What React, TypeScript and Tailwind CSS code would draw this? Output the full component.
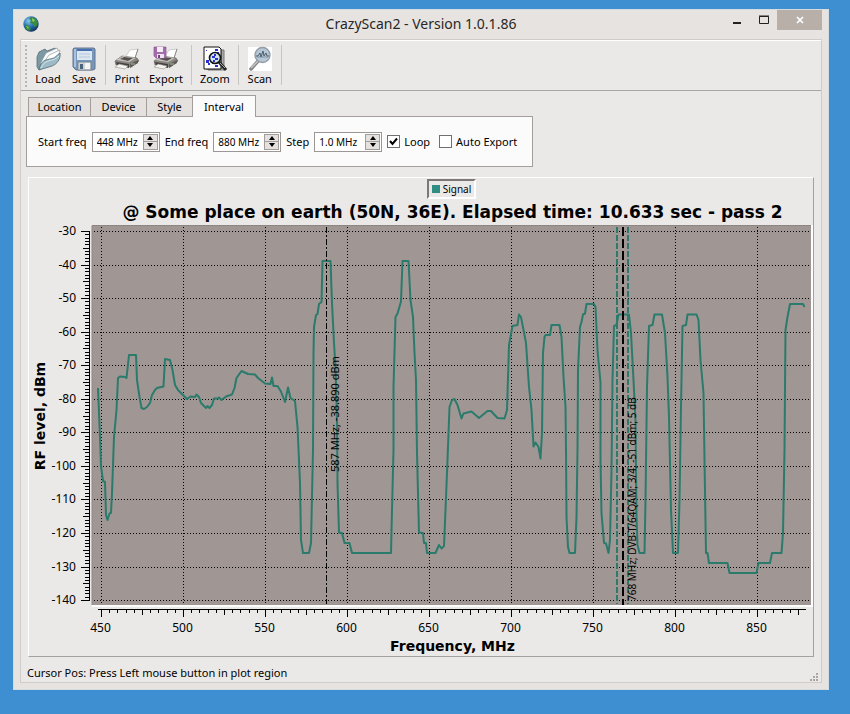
import { useState } from "react";
import type { ReactNode } from "react";

// signal level samples, already in plot coordinates
const TRACE = `98,388 100,437 101,466 103,481 105,482 106,515 107.5,520 109.5,513.5 111,513 112,493 114,437 116.5,410
118,378 120,376.5 125,377 126.5,378 129,355 136,355 137,380 139.5,397 141.5,408 144,409 147,407 150,403 152,395 155,390
157,388 163.5,386.5 165,359 170,360 172.5,370 175,385 178,390 183,395 187,399 190.5,396.5 195,397 196.5,394.5 199,397 201,403
206,408 207.5,406 209.5,408 212,405 214,398.5 218,398.5 219,397.5 221.5,400 226,396.5 232,394.5 234.5,388 236.5,378 241.5,371
248,374 255,374.5 258,378 265,383.5 270.5,384 272,377.5 273.5,386 277.5,386 281,391.5 285,402 288,387.5 290.5,398 295,401
297.5,427 299,460 300,483 301,540 303,553 309,553 311,543 313,450 313.5,353 314,327 316,315 317.5,314 319,304 321.5,302
322.5,261 330.5,261 332,303 334,343 335.5,367 337,420 337.5,483 339,532.5 342,533 344.5,543 349.5,543 352,553 391,553
392,510 393.5,450 393.5,387 395.5,317 397.5,313.5 401,301.5 402.5,261 408.5,261 410.5,300 413,317 414.5,353 416,380 417,453
419,532.5 423,533 424,543 426,543 427,553 435.5,553 439,545 441.5,548.5 444,546 445.5,510 447.5,460 449.5,407 452,400
454.5,399 457.5,405 461.5,418.5 463.5,413.5 471.5,411.5 479,418 487.5,411 491,411 497.5,418 504.5,418.5 507,410 509,345
512.5,326 517.5,325 519,314.5 521,317 526,343 529,387 531.5,410 533.5,446.5 535.5,442.5 538.5,447 540.5,458.5 542,433
543,353 544.5,337 545.5,335 550,335 551.5,325 559.5,325 561.5,337 563.5,377 565.5,407 566,450 566.5,517 568,547 569.5,553
575,553 576.5,517 577.5,450 578,370 580,327 581.5,322 583,314.5 585,313.5 586.5,304 594,304 595.5,307 597.5,350 600.5,383
600.5,460 601.5,513 604,543 606,543.5 608.5,553 610,540 611.5,470 612.5,380 614,326 616.5,325 618.5,314.5 629,314.5
631,333 633.5,380 635.5,420 636.5,517 637.5,545 639.5,553 644.5,553 645.5,500 647,387 649,326 652.5,325 654.5,314.5
662,314.5 665,333 667.5,377 669,417 671,510 673,553 678,553 679.5,500 681,407 682.5,326 686,325 687.5,314.5 696.5,314.5
698.5,320 700.5,360 703.5,393 704.5,460 706,553 707.5,553 709,563 727.5,563 729.5,573 756.5,573 758.5,563 770,563 772,553
781.5,553 783,533 784.5,450 785.5,330 787.5,317 790,304 803,304 804.5,307`;

const xOf = (freq: number) => Math.round(101 + (freq - 450) * 1.64) + 0.5;
const yOf = (level: number) => Math.round(231 + (-30 - level) * 3.355) + 0.5;

const levels = Array.from({ length: 111 }, (_, i) => -30 - i);
const freqs = Array.from({ length: 86 }, (_, i) => 450 + i * 5);

function FolderIcon() {
  return (
    <svg viewBox="0 0 26 26" className="size-[26px]">
      <path d="M2 11 4 6l6-3 2 2 8-3 2 2-3 8-12 5-3 7-2-3z" fill="#7d98a5" stroke="#54707d" strokeWidth=".8" />
      <path d="m5 18 6-11 11-5 2 4-6 9z" fill="#f7f9fa" stroke="#87949a" strokeWidth=".7" />
      <path d="m7 19 7-10 11-5-1 4-5 9z" fill="#fff" stroke="#929ca0" strokeWidth=".7" />
      <path d="M4 24c1-5 3-9 7-10l8-2 6-5c1 6-3 11-8 13z" fill="#9dbac7" stroke="#4f6c79" strokeWidth=".8" />
      <path d="M6 22c2-4 4-6 7-7 5-1 8-2 11-5" fill="none" stroke="#d6e5eb" />
    </svg>
  );
}

function DiskIcon() {
  return (
    <svg viewBox="0 0 26 26" className="size-[26px]">
      <path d="M3 2h20l1 1v20l-2 1H5l-3-3V3z" fill="#7798bd" stroke="#66758c" />
      <path d="M3 3h2v18H3z" fill="#a9c2de" />
      <path d="M6 3h15v11H6z" fill="#dce7f2" />
      <path d="M6 3h15v2H6z" fill="#4670b4" />
      <path d="M8 8h11M8 11h11" stroke="#b5c6d8" />
      <path d="M7 16h13v8H7z" fill="#cfd2d3" stroke="#69788c" strokeWidth=".7" />
      <path d="M9 18h3v5H9z" fill="#4a617e" />
      <path d="M14 17h5v6h-5z" fill="#f4f4f2" />
    </svg>
  );
}

function PrinterShape() {
  return (
    <>
      <path d="m12 10 4-6 8-1-4 12z" fill="#fff" stroke="#bbb" strokeWidth=".7" />
      <path d="m24 3-4 12" stroke="#777" strokeWidth=".8" />
      <path d="m1 15 7-5 15 2 2 3-8 6L2 19z" fill="#8a8682" stroke="#5d5956" strokeWidth=".6" />
      <path d="m2 14 7-4 13 2-7 4z" fill="#c7c4bf" />
      <path d="m6 13 4-2 9 1-5 3z" fill="#55514e" />
      <path d="m2 16 13 2v4L3 19z" fill="#44403d" />
      <path d="m16 18 8-4v3l-8 5z" fill="#5f5b58" />
      <path d="m1 21 4-3 9 2-3 3z" fill="#f5f3ef" stroke="#96918c" strokeWidth=".6" />
      <path d="M17 18h4" stroke="#a1c38e" />
    </>
  );
}

function PrinterIcon() {
  return (
    <svg viewBox="0 0 26 26" className="size-[26px]">
      <PrinterShape />
    </svg>
  );
}

function ExportIcon() {
  return (
    <svg viewBox="0 0 26 26" className="size-[26px]">
      <PrinterShape />
      <path d="M1 1h12v11H3l-2-2z" fill="#a36dad" stroke="#8b5c93" strokeWidth=".7" />
      <path d="M4 1h6v5H4z" fill="#f4edf5" />
      <path d="M4 8h7v4H4z" fill="#eee4ef" />
      <path d="M5 9h2v3H5z" fill="#74447c" />
    </svg>
  );
}

function ZoomIcon() {
  return (
    <svg viewBox="0 0 26 26" className="size-[26px]">
      <path d="M6 4h16v20H6z" fill="#aaa" stroke="#777" />
      <path d="M4 3h15v20H4z" fill="#ddd" stroke="#777" />
      <path d="M2 1h15l2 2v20H2z" fill="#fff" stroke="#111" />
      <path d="M13 3h3v2h-3zM4 14h3v3H4zM6 17h2v2H6zM13 19h3v2h-3zM4 4h1v1H4zM15 6h2v2h-2z" fill="#2830d8" />
      <circle cx="13" cy="12" r="5.5" fill="#d3e6ef" stroke="#111" strokeWidth="1.6" />
      <path d="M10 10h3v2h-3zM13 12h3v2h-3zM12 8h2v2h-2zM11 14h2v2h-2z" fill="#2830d8" />
      <path d="m17 16 7 8" stroke="#222" strokeWidth="3" />
      <path d="m18 17 5 5" stroke="#aaa" />
    </svg>
  );
}

function ScanIcon() {
  return (
    <svg viewBox="0 0 26 26" className="size-[26px]">
      <path d="M1 1h24v24H1z" fill="#fff" />
      <path d="m11 15-7 8" stroke="#858585" strokeWidth="3.5" strokeLinecap="round" />
      <path d="m11 15-7 7" stroke="#c9c9c9" strokeWidth="1.5" />
      <circle cx="15.5" cy="9" r="7.5" fill="#b6c7d5" stroke="#939da6" strokeWidth="1.4" />
      <path d="M9 10h2l2-3 1 4 2-6 1 5 2-3 1 3h2" fill="none" stroke="#334554" strokeWidth=".8" />
      <path d="M10 11h11" stroke="#65798a" strokeWidth=".7" />
    </svg>
  );
}

function GlobeIcon() {
  return (
    <svg viewBox="0 0 16 16" className="size-4">
      <defs>
        <radialGradient id="ocean" cx=".35" cy=".3" r=".8">
          <stop offset="0" stopColor="#8ac9ee" />
          <stop offset=".5" stopColor="#236fae" />
          <stop offset="1" stopColor="#0b2750" />
        </radialGradient>
      </defs>
      <circle cx="8" cy="8" r="7.7" fill="url(#ocean)" />
      <path d="m8 1 4 1 3 4-1 4-3 1-1-3-3-1 1-3-2-1zM2 8l4 2 2 3-2 2-3-2z" fill="#398a42" />
      <path d="m9 2 3 2-1 2-2-1zM3 10l3 1-1 2z" fill="#83c461" />
    </svg>
  );
}

function ToolButton({ label, children }: { label: string; children: ReactNode }) {
  return (
    <button className="flex flex-col items-center px-1 pt-[5px]">
      {children}
      <span className="text-[11px] leading-[14px]">{label}</span>
    </button>
  );
}

function Separator() {
  return <div className="mx-1 mt-1 h-10 w-px bg-[#c9c5c2]" />;
}

interface SpinProps {
  id: string;
  label: string;
  start: number;
  step?: number;
  digits?: number;
}

function SpinField({ id, label, start, step = 1, digits = 0 }: SpinProps) {
  const [value, setValue] = useState(start);

  return (
    <div className="flex items-center gap-[5px]">
      <label htmlFor={id}>{label}</label>
      <div className="flex h-5 items-stretch border border-[#9c9794] bg-white p-px">
        <input
          id={id}
          readOnly
          value={`${value.toFixed(digits)} MHz`}
          className="w-[49px] bg-transparent pl-[3px] text-[10px] outline-none"
        />
        <div className="flex w-[15px] flex-col border border-[#a29d9a] bg-[#e4e1df]">
          <button
            aria-label={`${label} up`}
            onClick={() => setValue(value + step)}
            className="flex flex-1 items-center justify-center border-b border-[#a29d9a]"
          >
            <svg viewBox="0 0 6 4" className="h-1 w-[6px]"><path d="m0 4 3-4 3 4z" /></svg>
          </button>
          <button
            aria-label={`${label} down`}
            onClick={() => setValue(value - step)}
            className="flex flex-1 items-center justify-center"
          >
            <svg viewBox="0 0 6 4" className="h-1 w-[6px]"><path d="m0 0 3 4 3-4z" /></svg>
          </button>
        </div>
      </div>
    </div>
  );
}

function CheckField({ label, initial }: { label: string; initial: boolean }) {
  const [checked, setChecked] = useState(initial);

  return (
    <label className="flex items-center gap-1">
      <span className="grid">
        <input
          type="checkbox"
          checked={checked}
          onChange={(e) => setChecked(e.target.checked)}
          className="col-start-1 row-start-1 size-[13px] appearance-none border border-[#736f6d] bg-white"
        />
        {checked && (
          <svg viewBox="0 0 13 13" className="pointer-events-none col-start-1 row-start-1 size-[13px]">
            <path d="m3 6 2.5 3L10 3.5" fill="none" stroke="#000" strokeWidth="2" />
          </svg>
        )}
      </span>
      {label}
    </label>
  );
}

function SpectrumPlot() {
  return (
    <svg viewBox="29 224 784 413" className="block w-full overflow-visible" fontFamily="'Noto Sans', sans-serif">
      <path d="M92 225h721v382H92z" fill="#fff" />
      <path d="M92 225h719v380H92z" fill="#a09694" />
      <path d="M92 605V225.5h719" fill="none" stroke="#8e8582" />

      {/* grid */}
      {levels.filter((l) => l % 10 === 0).map((l) => (
        <path key={l} d={`M94 ${yOf(l)}H810`} stroke="#000" strokeDasharray="1 2" />
      ))}
      {freqs.filter((f) => f % 50 === 0).map((f) => (
        <path key={f} d={`M${xOf(f)} 227V604`} stroke="#000" strokeDasharray="1 2" />
      ))}

      <polyline points={TRACE} fill="none" stroke="#2b7b6c" strokeWidth="2" strokeLinejoin="round" />

      {/* markers */}
      <path d="M326.5 227V604" stroke="#000" strokeDasharray="6 2 2 2" />
      <path d="M617 227V604M628 227V604" stroke="#2b7b6c" strokeWidth="2" strokeDasharray="6 2" />
      <path d="M623 227V605" stroke="#000" strokeWidth="2" strokeDasharray="9 3" />
      <text transform="translate(339 472) rotate(-90)" fontSize="11">587 MHz; -38.890 dBm</text>
      <text transform="translate(636 601) rotate(-90)" fontSize="10">768 MHz; DVB-T/64QAM; 3/4; -51 dBm; 5 dB</text>

      {/* level axis */}
      <path d="M89.5 231V601" stroke="#000" />
      {levels.map((l) => (
        <path key={l} d={`M${l % 10 === 0 ? 81 : l % 5 === 0 ? 83 : 85} ${yOf(l)}H90`} stroke="#000" />
      ))}
      {levels.filter((l) => l % 10 === 0).map((l) => (
        <text key={l} x="76" y={yOf(l) + 3.5} fontSize="12" textAnchor="end">{l}</text>
      ))}
      <text
        transform="translate(45 416) rotate(-90)"
        fontFamily="'DejaVu Sans', sans-serif"
        fontSize="14"
        fontWeight="700"
        textAnchor="middle"
      >
        RF level, dBm
      </text>

      {/* frequency axis */}
      <path d="M98 609.5H806" stroke="#000" />
      {freqs.map((f) => (
        <path key={f} d={`M${xOf(f)} 609V${f % 50 === 0 ? 617 : f % 25 === 0 ? 615 : 613}`} stroke="#000" />
      ))}
      {freqs.filter((f) => f % 50 === 0).map((f) => (
        <text key={f} x={xOf(f) - 1} y="632" fontSize="12" textAnchor="middle">{f}</text>
      ))}
    </svg>
  );
}

const TABS = [
  { name: "Location", width: "w-[62px]" },
  { name: "Device", width: "w-[56px]" },
  { name: "Style", width: "w-[46px]" },
  { name: "Interval", width: "w-16" },
];

export default function App() {
  const [tab, setTab] = useState("Interval");

  return (
    <div className="min-h-screen bg-[#3e8fd1] pt-[9px] pr-[21px] pb-6 pl-[13px] font-['Noto_Sans',sans-serif] text-[11px] leading-[14px] text-black">
      <div className="border border-[#d5dce0] bg-[#e6e3e1] px-[6px] pb-[6px]">
        <header className="flex h-[29px] items-start">
          <div className="flex w-[104px] pt-[6px] pl-[3px]"><GlobeIcon /></div>
          <h1 className="flex-1 pt-1 text-center text-[14px] leading-5 text-[#292725]">
            CrazyScan2 - Version 1.0.1.86
          </h1>
          <div className="flex w-[104px] justify-end">
            <button aria-label="Minimize" className="flex h-5 w-[27px] items-center justify-center">
              <svg viewBox="0 0 10 10" className="size-[10px]"><path d="M1 7h8v2H1z" fill="#222" /></svg>
            </button>
            <button aria-label="Maximize" className="flex h-5 w-[27px] items-center justify-center">
              <svg viewBox="0 0 10 10" className="size-[10px]"><path d="M.5 1.5h9v7h-9zM0 1h10" fill="none" stroke="#222" /></svg>
            </button>
            <button aria-label="Close" className="flex h-5 w-[45px] items-center justify-center bg-[#b8afa9]">
              <svg viewBox="0 0 8 8" className="size-2"><path d="m1 1 6 6M7 1 1 7" stroke="#fff" strokeWidth="1.7" /></svg>
            </button>
          </div>
        </header>

        <main className="border border-[#d0ccca] bg-[#ebe9e7]">
          <div className="flex h-[51px] border-t border-b border-t-white border-b-[#aaa6a2] pl-1">
            <div className="mt-1 mr-1 h-[42px] border-l-2 border-dotted border-[#b8b4b0]" />
            <ToolButton label="Load"><FolderIcon /></ToolButton>
            <div className="w-[2px]" />
            <ToolButton label="Save"><DiskIcon /></ToolButton>
            <Separator />
            <ToolButton label="Print"><PrinterIcon /></ToolButton>
            <div className="w-px" />
            <ToolButton label="Export"><ExportIcon /></ToolButton>
            <Separator />
            <ToolButton label="Zoom"><ZoomIcon /></ToolButton>
            <Separator />
            <ToolButton label="Scan"><ScanIcon /></ToolButton>
            <Separator />
          </div>

          <div className="px-[5px] pt-1">
            <div role="tablist" className="flex items-end pl-[2px]">
              {TABS.map((t) => (
                <button
                  key={t.name}
                  role="tab"
                  aria-selected={tab === t.name}
                  onClick={() => setTab(t.name)}
                  className={`${t.width} border border-b-0 border-[#a39e9b] ${
                    tab === t.name ? "-mb-px h-[22px] bg-[#fcfbfb]" : "h-[19px] border-r-0 bg-[#e4e1df]"
                  }`}
                >
                  {t.name}
                </button>
              ))}
            </div>
            <div className="flex h-[51px] w-[507px] items-center gap-[5px] border border-[#a39e9b] bg-[#fcfbfb] pl-[11px]">
              <SpinField id="start" label="Start freq" start={448} />
              <SpinField id="end" label="End freq" start={880} />
              <SpinField id="step" label="Step" start={1} step={0.1} digits={1} />
              <CheckField label="Loop" initial={true} />
              <div className="ml-1">
                <CheckField label="Auto Export" initial={false} />
              </div>
            </div>
          </div>

          <section className="mx-[7px] mt-[10px] border border-t-white border-r-[#a5a19e] border-b-[#a5a19e] border-l-white">
            <div className="flex justify-center pt-px pl-[61px]">
              <div className="flex h-5 items-center gap-[3px] border-2 border-t-[#7d7875] border-r-white border-b-white border-l-[#7d7875] px-[3px] text-[10px]">
                <span className="size-2 bg-[#2f8d83]" />
                Signal
              </div>
            </div>
            <h2 className="pt-px pl-[63px] text-center font-['DejaVu_Sans',sans-serif] text-[17px] leading-6 font-bold whitespace-nowrap">
              @ Some place on earth (50N, 36E). Elapsed time: 10.633 sec - pass 2
            </h2>
            <SpectrumPlot />
            <p className="pl-[63px] text-center font-['DejaVu_Sans',sans-serif] text-[14px] leading-[19px] font-bold">
              Frequency, MHz
            </p>
          </section>

          <footer className="flex h-[25px] items-center justify-between pr-[2px] pl-[6px]">
            <span className="pt-[6px]">Cursor Pos: Press Left mouse button in plot region</span>
            <svg viewBox="0 0 9 9" className="size-[9px] self-end">
              <path d="M6 0h2v2H6zM3 3h2v2H3zM6 3h2v2H6zM0 6h2v2H0zM3 6h2v2H3zM6 6h2v2H6z" fill="#aaa5a1" />
            </svg>
          </footer>
        </main>
      </div>
    </div>
  );
}
